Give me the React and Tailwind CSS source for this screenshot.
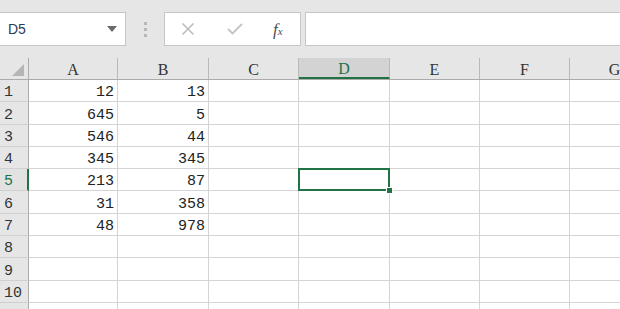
const COLS = [
  { id: 'A', w: 'w-[89px]' },
  { id: 'B', w: 'w-[91px]' },
  { id: 'C', w: 'w-[90px]' },
  { id: 'D', w: 'w-[91px]' },
  { id: 'E', w: 'w-[90px]' },
  { id: 'F', w: 'w-[90px]' },
  { id: 'G', w: 'w-[90px]' },
]

const DATA = [
  [12, 13], [645, 5], [546, 44], [345, 345], [213, 87],
  [31, 358], [48, 978], [], [], [], [],
]

const mono = { fontFamily: '"Liberation Mono", "DejaVu Sans Mono", monospace' }

function Toolbar() {
  return (
    <div className="flex h-[58px] pt-[12px] items-start">
      {/* Name box */}
      <div className="w-[127px] h-[34px] ml-[-1px] bg-white border border-[#c6c6c6] flex items-center pl-[8px] pr-[8px]">
        <span className="flex-1 text-[14px] text-[#2b3a55] font-['Liberation_Sans',sans-serif]">D5</span>
        <svg width="10" height="6" viewBox="0 0 10 6"><path d="M0 0h10L5 6z" fill="#6b6b6b" /></svg>
      </div>
      {/* Dots */}
      <div className="w-[38px] h-[34px] flex flex-col items-center justify-center gap-[3px]">
        <span className="w-[3px] h-[3px] bg-[#b8b8b8]" />
        <span className="w-[3px] h-[3px] bg-[#b8b8b8]" />
        <span className="w-[3px] h-[3px] bg-[#b8b8b8]" />
      </div>
      {/* Buttons */}
      <div className="w-[137px] h-[34px] bg-white border border-[#c6c6c6] flex items-center">
        <svg className="ml-[16px]" width="14" height="14" viewBox="0 0 14 14">
          <path d="M1.5 1.5l11 11M12.5 1.5l-11 11" stroke="#bdbdbd" strokeWidth="1.6" />
        </svg>
        <svg className="ml-[32px]" width="16" height="12" viewBox="0 0 16 12">
          <path d="M1 6l4.5 4.5L15 1" stroke="#c4c4c4" strokeWidth="1.8" fill="none" />
        </svg>
        <span className="ml-[30px] text-[#505050] italic font-['Liberation_Serif',serif] text-[17px] leading-none">
          f<span className="text-[11px]">x</span>
        </span>
      </div>
      {/* Formula input */}
      <div className="flex-1 h-[34px] ml-[4px] mr-[-2px] bg-white border border-[#c6c6c6]" />
    </div>
  )
}

function HeaderRow() {
  return (
    <div className="flex h-[22px] border-b border-[#ababab]">
      <div className="w-[29px] shrink-0 border-r border-[#ababab] relative">
        <svg className="absolute left-[12px] top-[6px]" width="12" height="12" viewBox="0 0 12 12">
          <path d="M12 0v12H0z" fill="#b5b5b5" />
        </svg>
      </div>
      {COLS.map(c => (
        <div key={c.id}
          className={`${c.w} shrink-0 flex items-center justify-center pt-[2px] border-r border-[#b9b9b9] text-[16px] font-['Liberation_Serif',serif] ${
            c.id === 'D' ? 'bg-[#d3d3d3] text-[#217346] border-b-2 border-b-[#217346]' : 'text-[#333]'
          }`}>
          {c.id}
        </div>
      ))}
    </div>
  )
}

function Row({ n, vals }) {
  const sel = n === 5
  return (
    <div className="flex h-[22.3px]">
      <div className={`w-[29px] shrink-0 pl-[4px] flex items-end leading-[16px] text-[15px] border-b border-[#d0d0d0] ${
        sel ? 'text-[#217346] border-r-2 border-r-[#217346] bg-[#e2e2e2]' : 'text-[#333] border-r border-r-[#ababab]'
      }`} style={mono}>
        {n < 11 ? n : ''}
      </div>
      {COLS.map((c, i) => (
        <div key={c.id}
          className={`${c.w} shrink-0 bg-white border-r border-b border-[#d4d4d4] flex items-end leading-[16px] justify-end pr-[3px] text-[15px] text-[#222] relative`}
          style={mono}>
          {vals[i]}
          {sel && c.id === 'D' && (
            <div className="absolute z-10 left-[-1px] top-[-1px] right-[-1px] bottom-[-1px] border-2 border-[#217346]">
              <div className="absolute right-[-5px] bottom-[-5px] w-[7px] h-[7px] bg-[#217346] border border-white" />
            </div>
          )}
        </div>
      ))}
    </div>
  )
}

export default function App() {
  return (
    <div className="w-[620px] h-[309px] overflow-hidden bg-[#e6e6e6]">
      <Toolbar />
      <HeaderRow />
      {DATA.map((vals, i) => (
        <Row key={i} n={i + 1} vals={vals} />
      ))}
    </div>
  )
}
